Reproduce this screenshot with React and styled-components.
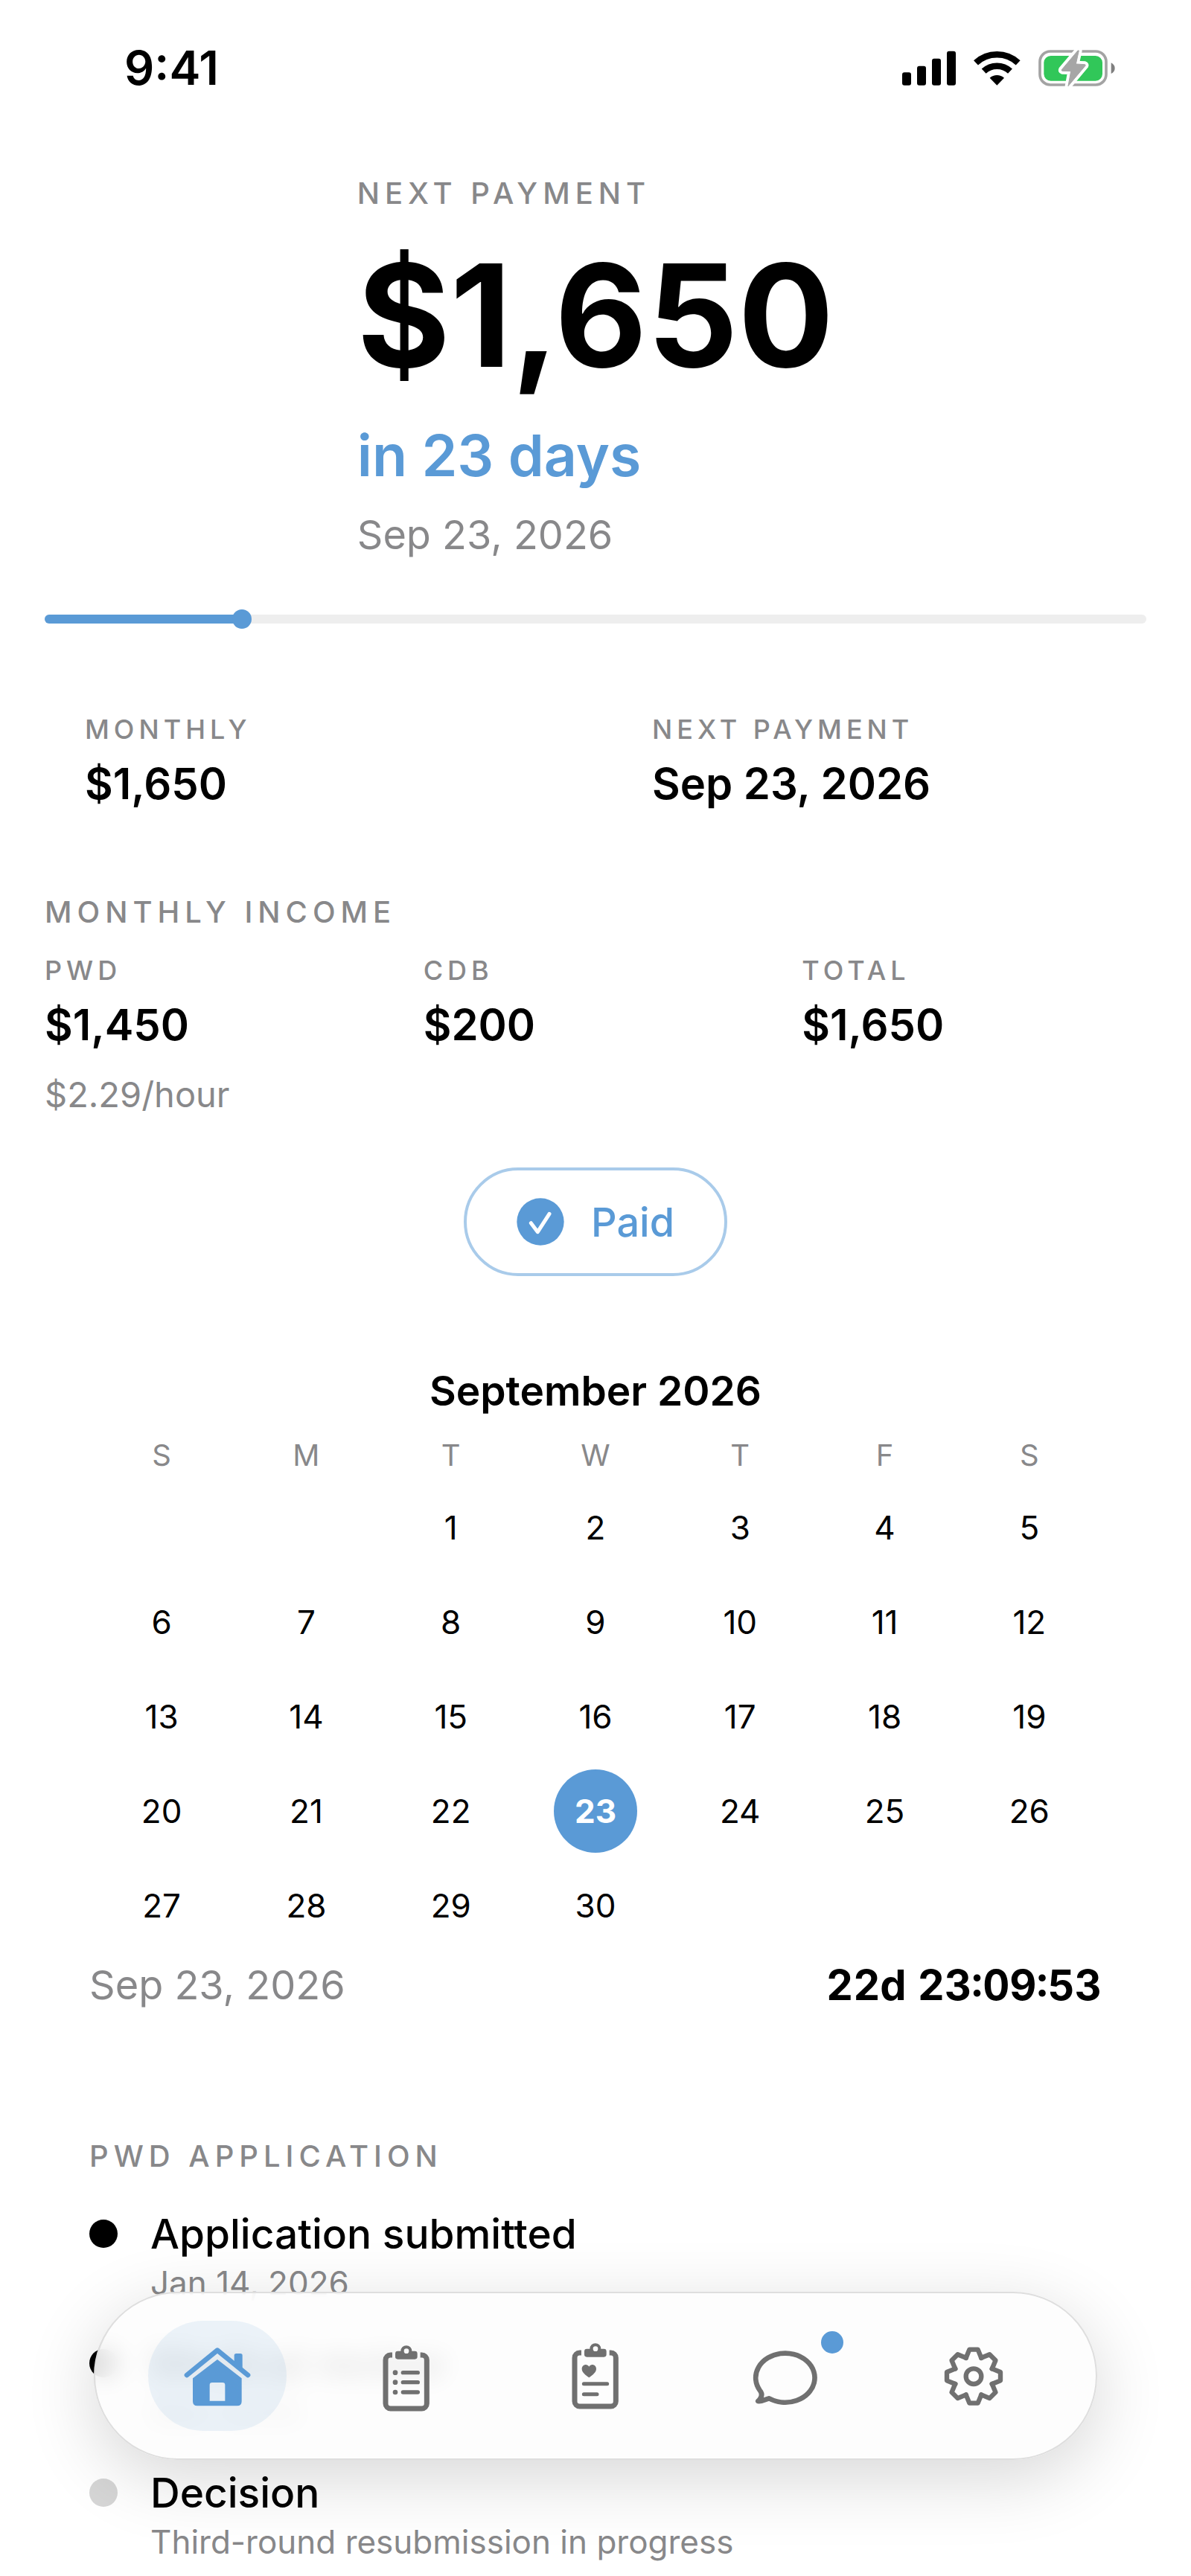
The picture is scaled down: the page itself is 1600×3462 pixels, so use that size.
import { useState } from "react";
import styled, { createGlobalStyle } from "styled-components";

const BLUE = "#5a9ad6";
const GRAY = "#88888a";

const WEEK = ["S", "M", "T", "W", "T", "F", "S"];
const FIRST_DAY = 2;
const DAY_COUNT = 30;
const PAY_DAY = 23;

const STEPS = [
  { title: "Application submitted", note: "Jan 14, 2026", done: true },
  { title: "Medical review", note: "Mar 2026", done: true },
  { title: "Decision", note: "Third-round resubmission in progress" },
];

const TABS = [
  { id: "home", label: "Home", Icon: HomeIcon },
  { id: "tasks", label: "Tasks", Icon: TasksIcon },
  { id: "health", label: "Health", Icon: HealthIcon },
  { id: "chat", label: "Messages", Icon: ChatIcon, badge: true },
  { id: "settings", label: "Settings", Icon: GearIcon },
];

function getWeeks() {
  const cells = [
    ...Array(FIRST_DAY).fill(null),
    ...Array.from({ length: DAY_COUNT }, (_, i) => i + 1),
  ];
  while (cells.length % 7) cells.push(null);

  const weeks = [];
  for (let i = 0; i < cells.length; i += 7) weeks.push(cells.slice(i, i + 7));
  return weeks;
}

export default function App() {
  const [tab, setTab] = useState("home");

  return (
    <>
      <GlobalStyle />

      <StatusBar>
        <span className="time">9:41</span>
        <span className="icons">
          <SignalIcon />
          <WifiIcon />
          <BatteryIcon />
        </span>
      </StatusBar>

      <main>
        <HeroBox>
          <SectionLabel as="h1">NEXT PAYMENT</SectionLabel>
          <p className="amount">$1,650</p>
          <p className="remain">in 23 days</p>
          <p className="date">Sep 23, 2026</p>
        </HeroBox>

        <ProgressTrack
          role="progressbar"
          aria-label="Payment period"
          aria-valuenow={18}
        >
          <ProgressFill style={{ width: "18%" }} />
        </ProgressTrack>

        <StatGrid>
          <Stat label="MONTHLY" value="$1,650" />
          <Stat label="NEXT PAYMENT" value="Sep 23, 2026" />
        </StatGrid>

        <IncomeBox>
          <SectionLabel>MONTHLY INCOME</SectionLabel>
          <div className="cols">
            <Stat label="PWD" value="$1,450" />
            <Stat label="CDB" value="$200" />
            <Stat label="TOTAL" value="$1,650" />
          </div>
          <p className="rate">$2.29/hour</p>
        </IncomeBox>

        <PaidBtn type="button">
          <CheckIcon />
          Paid
        </PaidBtn>

        <CalendarBox>
          <table>
            <caption>September 2026</caption>
            <thead>
              <tr>
                {WEEK.map((v, i) => (
                  <th key={i} scope="col">
                    {v}
                  </th>
                ))}
              </tr>
            </thead>
            <tbody>
              {getWeeks().map((week, i) => (
                <tr key={i}>
                  {week.map((day, j) => (
                    <td key={j}>
                      {day === PAY_DAY ? <PayDay>{day}</PayDay> : day}
                    </td>
                  ))}
                </tr>
              ))}
            </tbody>
          </table>

          <div className="countdown">
            <span>Sep 23, 2026</span>
            <strong>22d 23:09:53</strong>
          </div>
        </CalendarBox>

        <TimelineBox>
          <SectionLabel>PWD APPLICATION</SectionLabel>
          <ul>
            {STEPS.map((v) => (
              <Step key={v.title} $done={v.done}>
                <p className="title">{v.title}</p>
                <p className="note">{v.note}</p>
              </Step>
            ))}
          </ul>
        </TimelineBox>
      </main>

      <TabBar>
        {TABS.map(({ id, label, Icon, badge }) => (
          <TabBtn
            key={id}
            type="button"
            aria-label={label}
            $active={tab === id}
            onClick={() => setTab(id)}
          >
            <span className="pill">
              <Icon />
              {badge && <span className="badge" />}
            </span>
          </TabBtn>
        ))}
      </TabBar>
    </>
  );
}

function Stat({ label, value }) {
  return (
    <StatBox>
      <p className="label">{label}</p>
      <p className="value">{value}</p>
    </StatBox>
  );
}

function SignalIcon() {
  return (
    <svg width="72" height="49" viewBox="0 0 216 147">
      <rect x="0" y="91" width="36" height="52" rx="9" />
      <rect x="60" y="65" width="36" height="78" rx="9" />
      <rect x="120" y="35" width="36" height="108" rx="9" />
      <rect x="180" y="5" width="36" height="138" rx="9" />
    </svg>
  );
}

function WifiIcon() {
  return (
    <svg width="63" height="49" viewBox="0 0 189 147">
      <g fill="none" stroke="#000" strokeWidth="26">
        <path d="M9 52A125 125 0 0 1 179 52" />
        <path d="M41 86A78 78 0 0 1 147 86" />
      </g>
      <path d="M94 143L65 113A44 44 0 0 1 123 113Z" />
    </svg>
  );
}

function BatteryIcon() {
  const bolt =
    "M159 3L94 80Q92 84 96 85L131 86L120 146L189 64Q191 60 187 59L151 57L163 3Z";

  return (
    <svg width="103" height="49" viewBox="0 0 309 147">
      <rect
        x="6"
        y="6"
        width="267"
        height="135"
        rx="42"
        fill="none"
        stroke="#a3a3a3"
        strokeWidth="11"
      />
      <rect x="22" y="24" width="236" height="101" rx="28" fill="#31c759" />
      <path d="M293 52Q308 60 308 74T293 96Z" fill="#7f7f7f" />
      <path
        d={bolt}
        fill="#fff"
        stroke="#fff"
        strokeWidth="26"
        strokeLinejoin="round"
      />
      <path d={bolt} fill="#a6a6a6" stroke="#a6a6a6" strokeWidth="3" />
    </svg>
  );
}

function CheckIcon() {
  return (
    <svg width="64" height="64" viewBox="0 0 192 192">
      <circle cx="96" cy="96" r="95" fill={BLUE} />
      <path
        d="M58 101L85 137L132 64"
        fill="none"
        stroke="#fff"
        strokeWidth="15"
        strokeLinecap="round"
        strokeLinejoin="round"
      />
    </svg>
  );
}

function HomeIcon() {
  return (
    <svg viewBox="0 0 300 300">
      <path
        d="M27 147L150 47L273 147"
        fill="none"
        stroke="currentColor"
        strokeWidth="20"
        strokeLinecap="round"
        strokeLinejoin="round"
      />
      <path d="M218 100V68Q218 60 226 60H243Q251 60 251 68V128Z" />
      <path
        fillRule="evenodd"
        d="M150 84L248 160V253Q248 271 230 271H69Q51 271 51 253V160ZM119 251H181V187Q181 177 171 177H129Q119 177 119 187Z"
      />
    </svg>
  );
}

function Clipboard() {
  return (
    <>
      <path
        d="M93 66H86A20 20 0 0 0 66 86V262A20 20 0 0 0 86 282H212A20 20 0 0 0 232 262V86A20 20 0 0 0 212 66H206"
        fill="none"
        stroke="currentColor"
        strokeWidth="21"
      />
      <path
        fillRule="evenodd"
        d="M115 50H127A22 22 0 0 1 172 50H184Q194 50 194 60V73Q194 83 184 83H115Q105 83 105 73V60Q105 50 115 50ZM150 40A10 10 0 1 0 150 60A10 10 0 1 0 150 40Z"
      />
    </>
  );
}

function TasksIcon() {
  return (
    <svg viewBox="0 0 300 300">
      <Clipboard />
      {[137, 176, 216].map((y) => (
        <g key={y}>
          <circle cx="105" cy={y} r="10" />
          <path
            d={`M136 ${y}H196`}
            stroke="currentColor"
            strokeWidth="16"
            strokeLinecap="round"
          />
        </g>
      ))}
    </svg>
  );
}

function HealthIcon() {
  return (
    <svg viewBox="0 9 300 300">
      <Clipboard />
      <path d="M124 166C112 157 95 146 95 131C95 114 116 108 124 122C132 108 153 114 153 131C153 146 136 157 124 166Z" />
      <path
        d="M103 191H197M103 233H156"
        stroke="currentColor"
        strokeWidth="15"
        strokeLinecap="round"
      />
    </svg>
  );
}

function ChatIcon() {
  return (
    <svg viewBox="0 0 300 300">
      <path
        d="M88 241A119 99 0 1 0 50 208C62 222 60 236 43 252C60 254 74 243 88 241Z"
        fill="none"
        stroke="currentColor"
        strokeWidth="20"
        strokeLinejoin="round"
      />
    </svg>
  );
}

function GearIcon() {
  const tooth = "M-31 -74L-17 -108H17L31 -74";

  return (
    <svg viewBox="0 0 300 300">
      <g
        transform="translate(150 152)"
        fill="none"
        stroke="currentColor"
        strokeWidth="19"
        strokeLinecap="round"
        strokeLinejoin="round"
      >
        {[0, 45, 90, 135, 180, 225, 270, 315].map((deg) => (
          <path key={deg} d={tooth} transform={`rotate(${deg})`} />
        ))}
        <circle r="31" />
      </g>
    </svg>
  );
}

const GlobalStyle = createGlobalStyle`
  * {
    box-sizing: border-box;
  }

  body {
    margin: 0;
    color: #000;
    font-family: Inter, "Liberation Sans", sans-serif;
    background: #fff;
  }

  h1, h2, p, ul {
    margin: 0;
    padding: 0;
  }

  ul {
    list-style: none;
  }

  button {
    padding: 0;
    font-family: inherit;
    background: none;
    border: none;
    cursor: pointer;
  }

  svg {
    display: block;
    overflow: visible;
  }
`;

const StatusBar = styled.header`
  display: flex;
  justify-content: space-between;
  align-items: center;
  height: 182px;
  padding: 0 102px 0 167px;

  .time {
    font-size: 63px;
    font-weight: 600;
  }

  .icons {
    display: flex;
    gap: 24px;
  }
`;

const SectionLabel = styled.h2`
  color: ${GRAY};
  font-size: 40px;
  font-weight: 500;
  line-height: 48px;
  letter-spacing: 7px;
`;

const HeroBox = styled.section`
  display: flex;
  flex-direction: column;
  gap: 28px;
  width: fit-content;
  margin: 0 auto;
  padding-top: 54px;

  .amount {
    font-size: 191px;
    font-weight: 700;
    line-height: 224px;
  }

  .remain {
    color: ${BLUE};
    font-size: 77px;
    font-weight: 600;
    line-height: 96px;
  }

  .date {
    color: ${GRAY};
    font-size: 54px;
    line-height: 62px;
  }
`;

const ProgressTrack = styled.div`
  height: 12px;
  margin: 76px 60px 0;
  background: #eee;
  border-radius: 6px;
`;

const ProgressFill = styled.div`
  height: 100%;
  background: ${BLUE};
  border-radius: 6px;
  position: relative;

  &::after {
    content: "";
    width: 26px;
    height: 26px;
    background: ${BLUE};
    border-radius: 50%;
    transform: translateY(-50%);
    top: 50%;
    right: -12px;
    position: absolute;
  }
`;

const StatBox = styled.div`
  display: flex;
  flex-direction: column;
  gap: 19px;

  .label {
    color: ${GRAY};
    font-size: 36px;
    font-weight: 500;
    line-height: 44px;
    letter-spacing: 6px;
  }

  .value {
    font-size: 58px;
    font-weight: 600;
    line-height: 64px;
  }
`;

const StatGrid = styled.section`
  display: grid;
  grid-template-columns: 1fr 1fr;
  gap: 44px;
  margin: 120px 60px 0;

  ${StatBox} {
    padding-left: 54px;
  }
`;

const IncomeBox = styled.section`
  margin: 117px 60px 0;

  .cols {
    display: grid;
    grid-template-columns: repeat(3, 1fr);
    gap: 46px;
    margin-top: 32px;
  }

  .rate {
    margin-top: 34px;
    color: ${GRAY};
    font-size: 47px;
    line-height: 56px;
  }
`;

const PaidBtn = styled.button`
  display: flex;
  align-items: center;
  gap: 36px;
  height: 146px;
  margin: 70px auto 0;
  padding: 0 67px;
  color: ${BLUE};
  font-size: 54px;
  font-weight: 500;
  border: 4px solid #a9cbea;
  border-radius: 73px;
`;

const CalendarBox = styled.section`
  margin: 122px 120px 0;

  table {
    width: 100%;
    table-layout: fixed;
    border-collapse: collapse;
  }

  caption {
    padding-bottom: 31px;
    font-size: 55px;
    font-weight: 600;
    line-height: 64px;
  }

  th {
    padding: 0 0 9px;
    color: ${GRAY};
    font-size: 40px;
    font-weight: 400;
    line-height: 48px;
  }

  td {
    height: 127px;
    padding: 0;
    font-size: 44px;
    text-align: center;
  }

  .countdown {
    display: flex;
    justify-content: space-between;
    margin-top: 12px;
    font-size: 54px;
    line-height: 64px;

    span {
      color: ${GRAY};
    }

    strong {
      font-size: 56px;
      font-weight: 700;
      font-variant-numeric: tabular-nums;
    }
  }
`;

const PayDay = styled.span`
  display: flex;
  justify-content: center;
  align-items: center;
  width: 112px;
  height: 112px;
  margin: 0 auto;
  color: #fff;
  font-weight: 700;
  background: ${BLUE};
  border-radius: 50%;
`;

const TimelineBox = styled.section`
  margin: 174px 120px 0;

  ul {
    display: flex;
    flex-direction: column;
    gap: 50px;
    margin-top: 48px;
  }
`;

const Step = styled.li`
  display: grid;
  grid-template-columns: 38px 1fr;
  align-items: center;
  gap: 8px 44px;

  &::before {
    content: "";
    width: 38px;
    height: 38px;
    background: ${({ $done }) => ($done ? "#000" : "#d6d6d6")};
    border-radius: 50%;
  }

  .title {
    font-size: 55px;
    font-weight: 500;
    line-height: 64px;
  }

  .note {
    grid-column: 2;
    color: ${GRAY};
    font-size: 44px;
    line-height: 52px;
  }
`;

const TabBar = styled.nav`
  display: flex;
  height: 226px;
  padding: 0 37px;
  background: rgba(253, 253, 253, 0.88);
  border: 2px solid #dedede;
  border-radius: 113px;
  box-shadow: 0 24px 96px rgba(0, 0, 0, 0.16);
  backdrop-filter: blur(16px);
  right: 126px;
  bottom: 156px;
  left: 126px;
  position: fixed;
  z-index: 6;
`;

const TabBtn = styled.button`
  display: flex;
  flex: 1;
  justify-content: center;
  align-items: center;
  color: ${({ $active }) => ($active ? BLUE : "#707070")};

  .pill {
    display: flex;
    justify-content: center;
    align-items: center;
    width: 186px;
    height: 148px;
    background: ${({ $active }) =>
      $active ? "rgba(90, 154, 214, 0.11)" : "transparent"};
    border-radius: 74px;
    position: relative;
  }

  svg {
    width: 100px;
    height: 100px;
    fill: currentColor;
  }

  .badge {
    width: 30px;
    height: 30px;
    background: ${BLUE};
    border-radius: 50%;
    top: 14px;
    right: 14px;
    position: absolute;
  }
`;
